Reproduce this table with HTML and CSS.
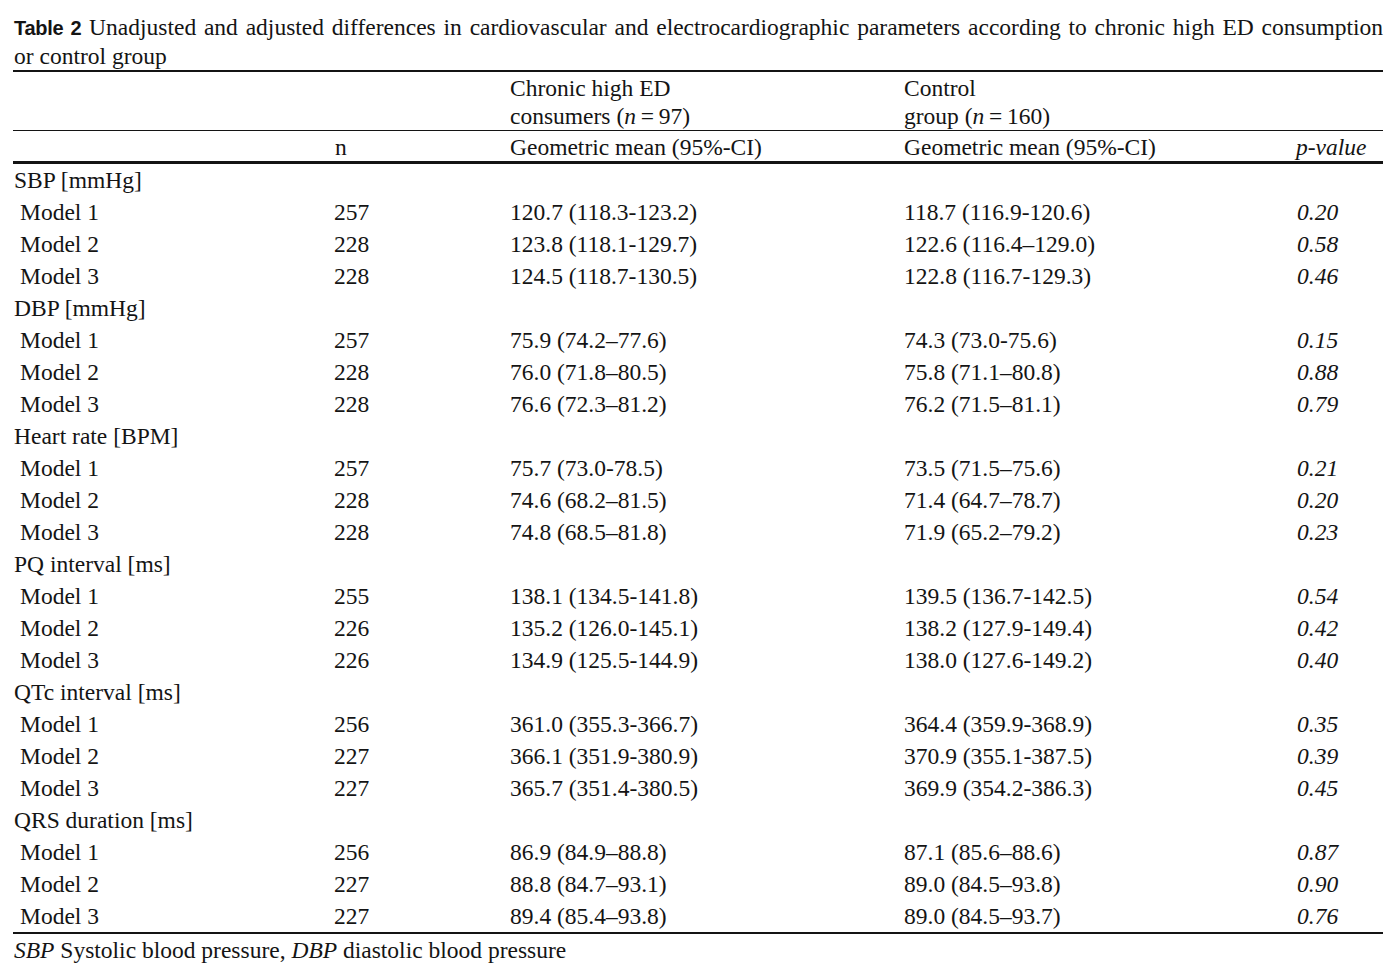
FILE: index.html
```html
<!DOCTYPE html>
<html lang="en">
<head>
<meta charset="utf-8">
<title>Table 2</title>
<link rel="stylesheet" href="styles.css">
</head>
<body>
<div class="page">
  <div class="caption">
    <div class="cap-line1"><span class="tlabel">Table 2</span> Unadjusted and adjusted differences in cardiovascular and electrocardiographic parameters according to chronic high ED consumption</div>
    <div class="cap-line2">or control group</div>
  </div>
  <table class="data">
    <colgroup>
      <col class="c1"><col class="c2"><col class="c3"><col class="c4"><col class="c5">
    </colgroup>
    <thead>
      <tr class="h1">
        <th></th>
        <th></th>
        <th>Chronic high ED<br>consumers (<i>n</i>&#8201;=&#8201;97)</th>
        <th>Control<br>group (<i>n</i>&#8201;=&#8201;160)</th>
        <th></th>
      </tr>
      <tr class="h2">
        <th></th>
        <th>n</th>
        <th>Geometric mean (95%-CI)</th>
        <th>Geometric mean (95%-CI)</th>
        <th class="pv"><i>p-value</i></th>
      </tr>
    </thead>
    <tbody>
      <tr><td class="grp">SBP [mmHg]</td><td></td><td></td><td></td><td></td></tr>
      <tr><td class="mdl">Model 1</td><td>257</td><td>120.7 (118.3-123.2)</td><td>118.7 (116.9-120.6)</td><td class="pv">0.20</td></tr>
      <tr><td class="mdl">Model 2</td><td>228</td><td>123.8 (118.1-129.7)</td><td>122.6 (116.4–129.0)</td><td class="pv">0.58</td></tr>
      <tr><td class="mdl">Model 3</td><td>228</td><td>124.5 (118.7-130.5)</td><td>122.8 (116.7-129.3)</td><td class="pv">0.46</td></tr>

      <tr><td class="grp">DBP [mmHg]</td><td></td><td></td><td></td><td></td></tr>
      <tr><td class="mdl">Model 1</td><td>257</td><td>75.9 (74.2–77.6)</td><td>74.3 (73.0-75.6)</td><td class="pv">0.15</td></tr>
      <tr><td class="mdl">Model 2</td><td>228</td><td>76.0 (71.8–80.5)</td><td>75.8 (71.1–80.8)</td><td class="pv">0.88</td></tr>
      <tr><td class="mdl">Model 3</td><td>228</td><td>76.6 (72.3–81.2)</td><td>76.2 (71.5–81.1)</td><td class="pv">0.79</td></tr>

      <tr><td class="grp">Heart rate [BPM]</td><td></td><td></td><td></td><td></td></tr>
      <tr><td class="mdl">Model 1</td><td>257</td><td>75.7 (73.0-78.5)</td><td>73.5 (71.5–75.6)</td><td class="pv">0.21</td></tr>
      <tr><td class="mdl">Model 2</td><td>228</td><td>74.6 (68.2–81.5)</td><td>71.4 (64.7–78.7)</td><td class="pv">0.20</td></tr>
      <tr><td class="mdl">Model 3</td><td>228</td><td>74.8 (68.5–81.8)</td><td>71.9 (65.2–79.2)</td><td class="pv">0.23</td></tr>

      <tr><td class="grp">PQ interval [ms]</td><td></td><td></td><td></td><td></td></tr>
      <tr><td class="mdl">Model 1</td><td>255</td><td>138.1 (134.5-141.8)</td><td>139.5 (136.7-142.5)</td><td class="pv">0.54</td></tr>
      <tr><td class="mdl">Model 2</td><td>226</td><td>135.2 (126.0-145.1)</td><td>138.2 (127.9-149.4)</td><td class="pv">0.42</td></tr>
      <tr><td class="mdl">Model 3</td><td>226</td><td>134.9 (125.5-144.9)</td><td>138.0 (127.6-149.2)</td><td class="pv">0.40</td></tr>

      <tr><td class="grp">QTc interval [ms]</td><td></td><td></td><td></td><td></td></tr>
      <tr><td class="mdl">Model 1</td><td>256</td><td>361.0 (355.3-366.7)</td><td>364.4 (359.9-368.9)</td><td class="pv">0.35</td></tr>
      <tr><td class="mdl">Model 2</td><td>227</td><td>366.1 (351.9-380.9)</td><td>370.9 (355.1-387.5)</td><td class="pv">0.39</td></tr>
      <tr><td class="mdl">Model 3</td><td>227</td><td>365.7 (351.4-380.5)</td><td>369.9 (354.2-386.3)</td><td class="pv">0.45</td></tr>

      <tr><td class="grp">QRS duration [ms]</td><td></td><td></td><td></td><td></td></tr>
      <tr><td class="mdl">Model 1</td><td>256</td><td>86.9 (84.9–88.8)</td><td>87.1 (85.6–88.6)</td><td class="pv">0.87</td></tr>
      <tr><td class="mdl">Model 2</td><td>227</td><td>88.8 (84.7–93.1)</td><td>89.0 (84.5–93.8)</td><td class="pv">0.90</td></tr>
      <tr class="last"><td class="mdl">Model 3</td><td>227</td><td>89.4 (85.4–93.8)</td><td>89.0 (84.5–93.7)</td><td class="pv">0.76</td></tr>
    </tbody>
  </table>
  <div class="footnote"><i>SBP</i> Systolic blood pressure, <i>DBP</i> diastolic blood pressure</div>
</div>
</body>
</html>
```

FILE: styles.css
```css
html, body {
  margin: 0;
  padding: 0;
  background: #ffffff;
}

body {
  font-family: "Liberation Serif", "Times New Roman", serif;
  font-size: 23.5px;
  color: #141414;
}

.page {
  padding: 13px 0 0 13px;
  width: 1370px;
}

.caption {
  line-height: 28px;
  padding-left: 1px;
}

.cap-line1 {
  text-align: justify;
  text-align-last: justify;
}

.tlabel {
  font-family: "Liberation Sans", Arial, sans-serif;
  font-weight: bold;
  font-size: 20px;
  letter-spacing: -0.3px;
}

.data {
  width: 1370px;
  border-collapse: separate;
  border-spacing: 0;
  table-layout: fixed;
}

.c1 { width: 321px; }
.c2 { width: 176px; }
.c3 { width: 394px; }
.c4 { width: 392px; }
.c5 { width: 87px; }

.data th,
.data td {
  padding: 0;
  text-align: left;
  font-weight: normal;
  vertical-align: top;
  white-space: nowrap;
}

.data td {
  line-height: 32px;
}

.h1 th {
  border-top: 2px solid #141414;
  border-bottom: 1px solid #141414;
  padding-top: 2px;
  line-height: 28px;
}

.h2 th {
  padding-top: 2px;
  line-height: 28px;
  border-bottom: 3px solid #141414;
}

.h2 th:nth-child(2) {
  padding-left: 1px;
}

.grp {
  padding-left: 1px !important;
}

.mdl {
  padding-left: 7px !important;
}

.pv {
  font-style: italic;
}

td.pv {
  padding-left: 1px !important;
}

.last td {
  border-bottom: 2px solid #141414;
}

.footnote {
  margin-top: 2px;
  line-height: 28px;
  padding-left: 1px;
}
```
